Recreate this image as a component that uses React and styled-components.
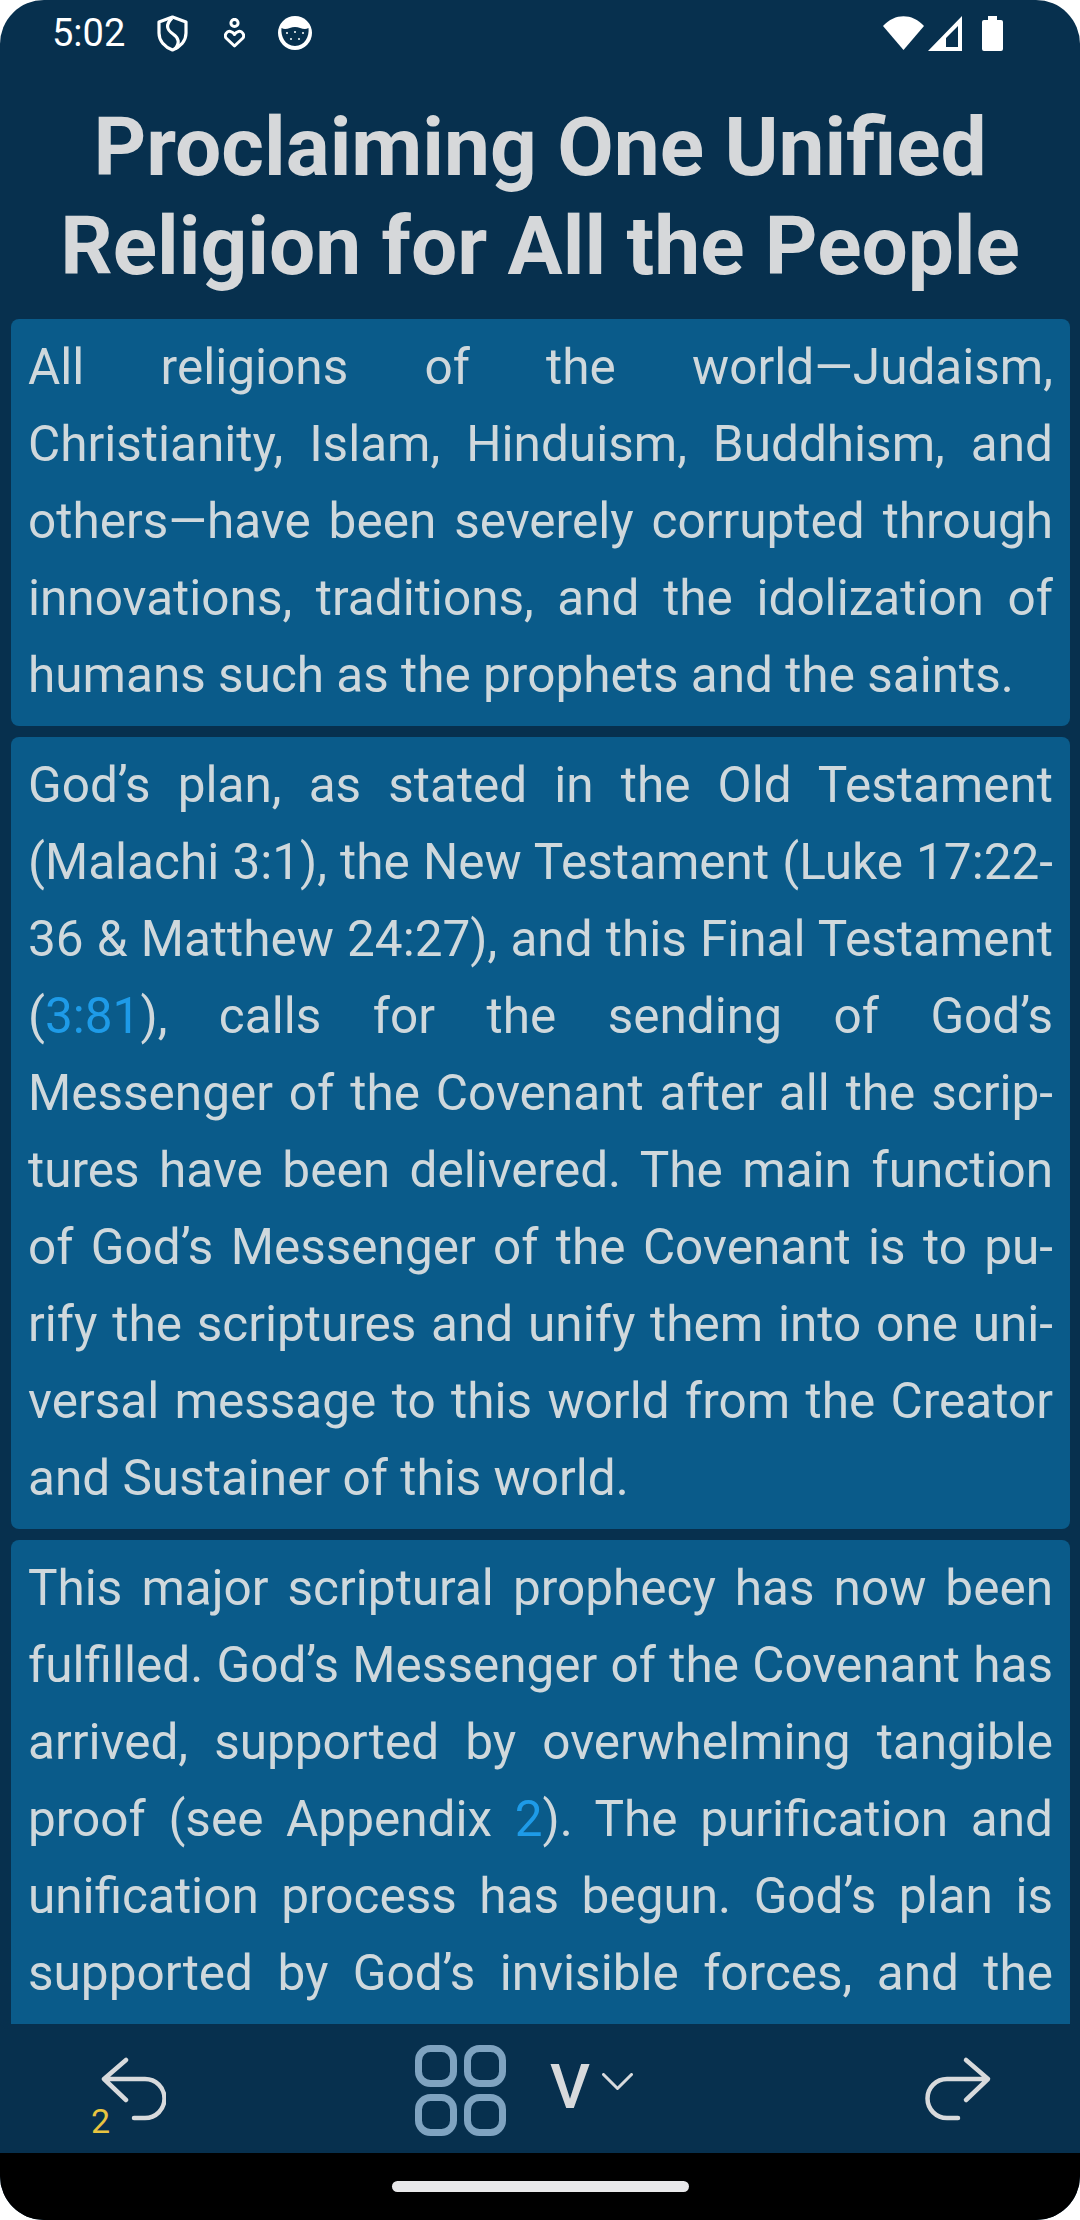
import styled, { createGlobalStyle } from "styled-components";

const GlobalStyle = createGlobalStyle`
  html, body {
    margin: 0;
    padding: 0;
    background: #fff;
  }
`;

const Screen = styled.div`
  width: 1080px;
  height: 2220px;
  display: flex;
  flex-direction: column;
  overflow: hidden;
  border-radius: 44px;
  background: #07304e;
  font-family: Roboto, "Liberation Sans", sans-serif;
`;

const StatusBar = styled.div`
  height: 66px;
  flex: none;
  display: flex;
  justify-content: space-between;
  align-items: center;
  padding: 0 77px 0 52px;
`;

const StatusLeft = styled.div`
  display: flex;
  align-items: center;
  gap: 32px;
`;

const Clock = styled.span`
  color: #fff;
  font-size: 38px;
  line-height: 66px;
`;

const PersonIcon = styled.svg`
  margin-left: 4px;
`;

const CatIcon = styled.svg`
  margin-left: 1px;
`;

const StatusRight = styled.div`
  display: flex;
  align-items: center;
  gap: 4px;
`;

const SignalIcon = styled.svg`
  display: block;
`;

const BatteryIcon = styled.svg`
  margin-left: 16px;
`;

const Title = styled.h1`
  flex: none;
  margin: 32px 0 23px;
  color: #d6d8da;
  font-size: 82px;
  font-weight: 700;
  line-height: 99px;
  text-align: center;
`;

const Content = styled.div`
  flex: 1;
  min-height: 0;
  overflow: hidden;
  display: flex;
  flex-direction: column;
  gap: 11px;
  padding: 0 10px 0 11px;
`;

const Card = styled.div`
  flex: none;
  padding: 10px 17px 12px;
  border-radius: ${({ $open }) => ($open ? "8px 8px 0 0" : "8px")};
  background: #0a5b8a;
`;

const Line = styled.div`
  color: #cfd8dc;
  font-size: 49.5px;
  line-height: 77px;
  text-align: justify;
  text-align-last: ${({ $last }) => ($last ? "left" : "justify")};
`;

const VerseLink = styled.span`
  color: #1e9be8;
`;

const BottomBar = styled.div`
  height: 129px;
  flex: none;
  display: flex;
  justify-content: space-between;
  align-items: center;
  padding: 0 88px 0 100px;
`;

const BackButton = styled.div`
  position: relative;
  display: flex;
  width: 68px;
`;

const Badge = styled.span`
  position: absolute;
  left: -9px;
  bottom: -17px;
  color: #e8c440;
  font-size: 34px;
  line-height: 38px;
`;

const CenterGroup = styled.div`
  display: flex;
  align-items: center;
  margin: 3px 44px 0 0;
`;

const VersionLabel = styled.span`
  margin: -6px 0 0 44px;
  color: #d8dadc;
  font-size: 62px;
  font-weight: 500;
  line-height: 62px;
`;

const ChevronIcon = styled.svg`
  margin: -18px 0 0 12px;
`;

const NavBar = styled.div`
  height: 67px;
  flex: none;
  display: flex;
  justify-content: center;
  align-items: flex-start;
  padding-top: 28px;
  box-sizing: border-box;
  background: #000;
`;

const HomeIndicator = styled.div`
  width: 297px;
  height: 11px;
  border-radius: 6px;
  background: #e8e8ea;
`;

const paragraphs = [
  {
    lines: [
      "All religions of the world—Judaism,",
      "Christianity, Islam, Hinduism, Buddhism, and",
      "others—have been severely corrupted through",
      "innovations, traditions, and the idolization of",
      "humans such as the prophets and the saints.",
    ],
  },
  {
    lines: [
      "God’s plan, as stated in the Old Testament",
      "(Malachi 3:1), the New Testament (Luke 17:22-",
      "36 & Matthew 24:27), and this Final Testament",
      <>
        (<VerseLink>3:81</VerseLink>), calls for the sending of God’s
      </>,
      "Messenger of the Covenant after all the scrip-",
      "tures have been delivered. The main function",
      "of God’s Messenger of the Covenant is to pu-",
      "rify the scriptures and unify them into one uni-",
      "versal message to this world from the Creator",
      "and Sustainer of this world.",
    ],
  },
  {
    // carries on below the fold, so no line of it is a last line
    open: true,
    lines: [
      "This major scriptural prophecy has now been",
      "fulfilled. God’s Messenger of the Covenant has",
      "arrived, supported by overwhelming tangible",
      <>
        proof (see Appendix <VerseLink>2</VerseLink>). The purification and
      </>,
      "unification process has begun. God’s plan is",
      "supported by God’s invisible forces, and the",
    ],
  },
];

export default function App() {
  return (
    <>
      <GlobalStyle />
      <Screen>
        <StatusBar>
          <StatusLeft>
            <Clock>5:02</Clock>
            <svg width="31" height="37" viewBox="0 0 31 37" fill="none" stroke="#fff" strokeWidth="3.2">
              <path d="M15.5 2 L29 7 V18 C29 26 23 32 15.5 35 C8 32 2 26 2 18 V7 Z" strokeLinejoin="round" />
              <path d="M15 3 C8 10 10 15 16 19 C22 23 23 28 18 34" />
            </svg>
            <PersonIcon width="21" height="30" viewBox="0 0 21 30" fill="none" stroke="#fff" strokeWidth="3">
              <circle cx="10.5" cy="5" r="3.6" />
              <path d="M10.5 28 L2 20 C0 17 3 12.5 6.5 13.5 C8.5 14 10 15.5 10.5 16.5 C11 15.5 12.5 14 14.5 13.5 C18 12.5 21 17 19 20 Z" strokeLinejoin="round" />
            </PersonIcon>
            <CatIcon width="34" height="34" viewBox="0 0 34 34">
              <circle cx="17" cy="17" r="17" fill="#fff" />
              <path d="M3.5 12 C8 15 12 11 17 11 C22 11 26 15 30.5 12 C31.5 20 27 30 17 30 C7 30 2.5 20 3.5 12 Z" fill="#07304e" />
              <g fill="#fff">
                <circle cx="9" cy="17" r="1" />
                <circle cx="17" cy="16" r="1" />
                <circle cx="25" cy="17" r="1" />
                <circle cx="13" cy="23" r="1" />
                <circle cx="21" cy="23" r="1" />
              </g>
            </CatIcon>
          </StatusLeft>
          <StatusRight>
            <svg width="41" height="34" viewBox="0 0 41 34">
              <path d="M20.5 34 L0 10 C12 -3 29 -3 41 10 Z" fill="#fff" />
            </svg>
            <SignalIcon width="34" height="35" viewBox="0 0 34 35">
              <path fillRule="evenodd" d="M34 0 V35 H0 Z M30 10 L18 22 V31 H30 Z" fill="#fff" />
            </SignalIcon>
            <BatteryIcon width="21" height="35" viewBox="0 0 21 35">
              <path d="M6 0 H15 V4 H19 Q21 4 21 6 V33 Q21 35 19 35 H2 Q0 35 0 33 V6 Q0 4 2 4 H6 Z" fill="#fff" />
            </BatteryIcon>
          </StatusRight>
        </StatusBar>

        <Title>
          Proclaiming One Unified
          <br />
          Religion for All the People
        </Title>

        <Content>
          {paragraphs.map(({ lines, open }, i) => (
            <Card key={i} $open={open}>
              {lines.map((line, j) => (
                <Line key={j} $last={!open && j === lines.length - 1}>
                  {line}
                </Line>
              ))}
            </Card>
          ))}
        </Content>

        <BottomBar>
          <BackButton>
            <svg width="66" height="68" viewBox="0 0 66 68" fill="none" stroke="#d8dadc" strokeWidth="4.5" strokeLinecap="round" strokeLinejoin="round">
              <path d="M26 5 L4 24 L26 45 M4 24 H45 A19.5 19.5 0 0 1 45 63 H34" />
            </svg>
            <Badge>2</Badge>
          </BackButton>

          <CenterGroup>
            <svg width="91" height="91" viewBox="0 0 91 91" fill="none" stroke="#7fa3c0" strokeWidth="7">
              <rect x="3.5" y="3.5" width="35" height="35" rx="12" />
              <rect x="52.5" y="3.5" width="35" height="35" rx="12" />
              <rect x="3.5" y="52.5" width="35" height="35" rx="12" />
              <rect x="52.5" y="52.5" width="35" height="35" rx="12" />
            </svg>
            <VersionLabel>V</VersionLabel>
            <ChevronIcon width="31" height="17" viewBox="0 0 31 17" fill="none" stroke="#d8dadc" strokeWidth="3" strokeLinecap="round" strokeLinejoin="round">
              <path d="M1.5 1.5 L15.5 15.5 L29.5 1.5" />
            </ChevronIcon>
          </CenterGroup>

          <svg width="68" height="68" viewBox="0 0 68 68" fill="none" stroke="#d8dadc" strokeWidth="4.5" strokeLinecap="round" strokeLinejoin="round">
            <path d="M42 5 L64 24 L42 45 M64 24 H23 A19.5 19.5 0 0 0 23 63 H34" />
          </svg>
        </BottomBar>

        <NavBar>
          <HomeIndicator />
        </NavBar>
      </Screen>
    </>
  );
}
